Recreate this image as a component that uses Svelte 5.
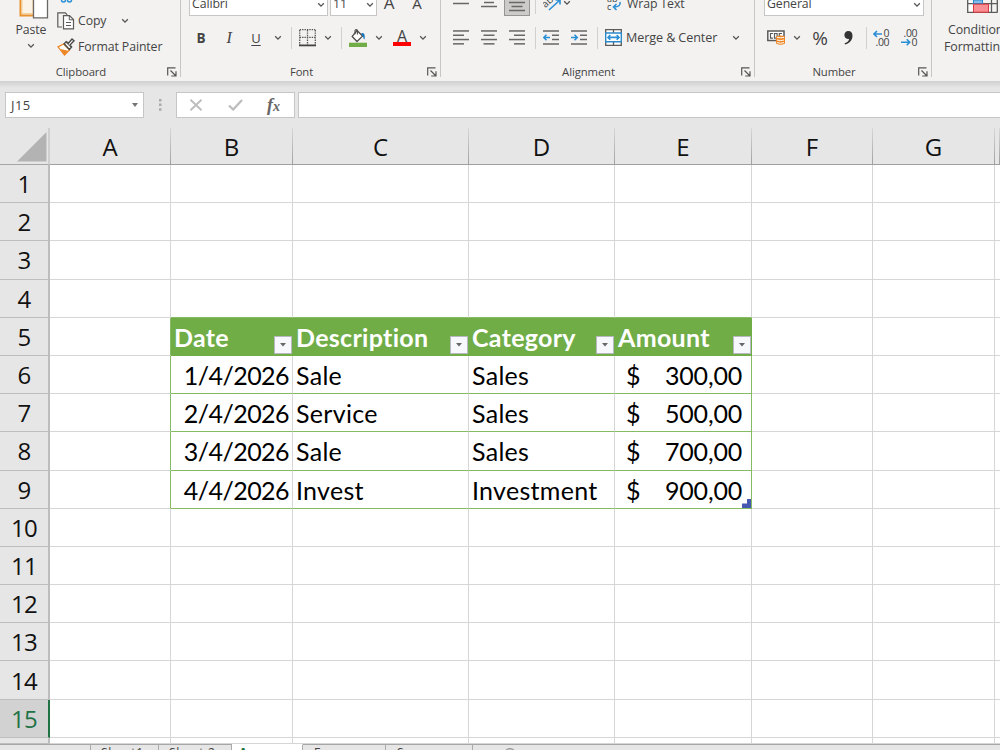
<script>
  const columns = ["A", "B", "C", "D", "E", "F", "G", ""];
  const rows = Array.from({ length: 15 }, (_, i) => i + 1);
  const selectedRow = 15;

  const table = {
    5: { B: "Date", C: "Description", D: "Category", E: "Amount" },
    6: { B: "1/4/2026", C: "Sale", D: "Sales", E: "300,00" },
    7: { B: "2/4/2026", C: "Service", D: "Sales", E: "500,00" },
    8: { B: "3/4/2026", C: "Sale", D: "Sales", E: "700,00" },
    9: { B: "4/4/2026", C: "Invest", D: "Investment", E: "900,00" },
  };

  const inTable = (row, col) => Boolean(table[row] && table[row][col]);
</script>

{#snippet chevron()}
  <svg class="chevron" width="8" height="6" viewBox="0 0 8 6"><path d="M1.2 1.3 4 4.1l2.8-2.8" /></svg>
{/snippet}

{#snippet launcher()}
  <svg class="launcher" width="10" height="10" viewBox="0 0 10 10">
    <path d="M.7 8.5V.8h7.8M3.5 3.5l5 5M9 4.2V9H4.2" />
  </svg>
{/snippet}

{#snippet lines(list)}
  <svg width="16" height="16" viewBox="0 0 16 16">
    {#each list as [x, w], i}
      <rect {x} y={0.2 + i * 4.3} width={w} height="1.5" fill="#686766" />
    {/each}
  </svg>
{/snippet}

<div class="app">
  <div class="ribbon">
    <section class="group clipboard">
      <div class="tools">
        <div class="paste">
          <svg width="30" height="20" viewBox="0 0 30 20">
            <path d="M1.5 0v15.500h13" fill="none" stroke="#e8912d" stroke-width="2" />
            <path d="M3 0v13.500h11V0" fill="#fbf3e6" stroke="#f6cf94" />
            <path d="M14.5 0v17.800h14V0" fill="#fff" stroke="#686766" stroke-width="1.3" />
          </svg>
          <span>Paste</span>
          {@render chevron()}
        </div>
        <div class="commands">
          <svg class="cut" width="14" height="4" viewBox="0 0 14 4">
            <circle cx="3.5" cy="0" r="2" /><circle cx="9.5" cy="0" r="2" />
          </svg>
          <div class="command">
            <svg width="18" height="18" viewBox="0 0 18 18">
              <path d="M5 15H.8V.8h7.5l2 2" fill="none" stroke="#5b5a59" stroke-width="1.2" />
              <path d="M6.5 3.6h6l4 4v9.3h-10z" fill="#fff" stroke="#5b5a59" stroke-width="1.2" />
              <path d="M12.3 3.8v4h4M9 10.5h5M9 13.5h5" fill="none" stroke="#5b5a59" />
            </svg>
            <span class="copy">Copy</span>
            {@render chevron()}
          </div>
          <div class="command">
            <svg width="18" height="18" viewBox="0 0 18 18">
              <path d="M1 8.8 6.5 6l6 6-5 5z" fill="#fff" stroke="#ee8625" stroke-width="1.3" />
              <path d="m3.5 11 7.5 1.8L7.5 17z" fill="#ee8625" />
              <path d="m7.2 5.7 2-2 2.2 1.5L15 1l2 1.8L13 7l1.6 2-2.2 2.4z" fill="#fff" stroke="#4c4b4a" stroke-width="1.4" />
              <path d="m9 4.3 5 5" stroke="#4c4b4a" />
            </svg>
            <span>Format Painter</span>
          </div>
        </div>
      </div>
      <footer><span>Clipboard</span>{@render launcher()}</footer>
    </section>

    <section class="group font">
      <div class="top">
        <div class="select name"><span>Calibri</span>{@render chevron()}</div>
        <div class="select size"><span>11</span>{@render chevron()}</div>
        <span class="letter grow">A</span>
        <span class="letter">A</span>
      </div>
      <div class="tools">
        <b>B</b>
        <i>I</i>
        <u>U</u>
        {@render chevron()}
        <hr />
        <svg width="17" height="18" viewBox="0 0 17 18">
          <path d="M.7.7h15.6M.7 8.4h15.6M.7 1v15M8.5 1v15M16.3 1v15" fill="none" stroke="#555" stroke-width="1.3" stroke-dasharray="1.4 1" />
          <path d="M0 16.4h17" stroke="#444" stroke-width="1.8" />
        </svg>
        {@render chevron()}
        <hr />
        <svg width="18" height="18" viewBox="0 0 18 18">
          <path d="m8 1.5 5.5 5.6-5.5 5.4-4.8-5.1z" fill="#fff" stroke="#4c4b4a" stroke-width="1.3" />
          <path d="M6 5.2V1.5Q7.3-.4 8.4 1.5v4" fill="none" stroke="#4c4b4a" stroke-width="1.1" />
          <path d="M12.3 4.2c2.8-.8 4 1.1 3.3 6.4-1.7-1-1.1-3-2.2-3.8z" fill="#1979bf" />
          <path d="M0 13.7h18V18H0z" fill="#70ad47" />
        </svg>
        {@render chevron()}
        <span class="font-color">A</span>
        {@render chevron()}
      </div>
      <footer><span>Font</span>{@render launcher()}</footer>
    </section>

    <section class="group alignment">
      <div class="top">
        <svg width="16" height="15" viewBox="0 0 16 15"><path d="M0 3.5h16" /></svg>
        <svg width="16" height="15" viewBox="0 0 16 15"><path d="M3 2.5h10M0 6.5h16" /></svg>
        <div class="pressed">
          <svg width="16" height="15" viewBox="0 0 16 15"><path d="M0 2.5h16M2.5 6.5h11M0 10.5h16" /></svg>
        </div>
        <hr />
        <svg width="19" height="15" viewBox="0 0 19 15">
          <text x="0" y="6" font-size="10" transform="rotate(-42 4 4)">ab</text>
          <path class="blue" d="M6 10 17 0M12.5 0H17v4.5" />
        </svg>
        {@render chevron()}
        <hr />
        <svg width="16" height="15" viewBox="0 0 16 15">
          <text x="1" y="2" font-size="9">ab</text>
          <text x="1" y="10" font-size="9">c</text>
          <path class="blue" d="M14 2q1 5-6 5M10.5 4 7.5 7l3 3" />
        </svg>
        <span>Wrap Text</span>
      </div>
      <div class="tools">
        {@render lines([[0, 16], [0, 11], [0, 16], [0, 11]])}
        {@render lines([[0, 16], [2.5, 11], [0, 16], [2.5, 11]])}
        {@render lines([[0, 16], [5, 11], [0, 16], [5, 11]])}
        <hr />
        <svg width="16" height="16" viewBox="0 0 16 16">
          <path d="M0 1h16M9 5.3h7M9 9.6h7M0 14h16" stroke="#686766" stroke-width="1.5" />
          <path class="blue" d="M7 7.5H.8M3.5 4.8.8 7.5l2.7 2.7" />
        </svg>
        <svg width="16" height="16" viewBox="0 0 16 16">
          <path d="M0 1h16M9 5.3h7M9 9.6h7M0 14h16" stroke="#686766" stroke-width="1.5" />
          <path class="blue" d="M0 7.5h6.2M3.5 4.8l2.7 2.7-2.7 2.7" />
        </svg>
        <hr />
        <svg width="17" height="17" viewBox="0 0 17 17">
          <path d="M.7.7h15.6v15.6H.7zM8.5.7v3M8.5 13v3.3" fill="#fff" stroke="#5b5a59" stroke-width="1.3" />
          <path d="M.7 4h15.6v8.8H.7z" fill="#fff" stroke="#2b88c9" stroke-width="1.4" />
          <path class="blue" d="M3 8.4h11M5.3 6 3 8.4l2.3 2.4M11.7 6 14 8.4l-2.3 2.4" />
        </svg>
        <span>Merge &amp; Center</span>
        {@render chevron()}
      </div>
      <footer><span>Alignment</span>{@render launcher()}</footer>
    </section>

    <section class="group number">
      <div class="top">
        <div class="select format"><span>General</span>{@render chevron()}</div>
      </div>
      <div class="tools">
        <svg width="18" height="15" viewBox="0 0 18 15">
          <path d="M.8 1h16.2v9.5H.8z" fill="#fff" stroke="#5b5a59" stroke-width="1.5" />
          <path d="M6 3.5H3.5v4.6H6M7.5 3.500h2.600v4.600H7.500zM15 3.500h-2.700v3" fill="none" stroke="#5b5a59" stroke-width="1.2" />
          <path d="M9 6.5q4.5-2 9 0v7q-4.5 2.4-9 0z" fill="#ee8625" />
          <path d="M10 7.3q3.500 1.200 7 0M10 10q3.500 1.200 7 0M10 12.600q3.500 1.200 7 0" fill="none" stroke="#fff" />
        </svg>
        {@render chevron()}
        <span class="percent">%</span>
        <svg width="9" height="14" viewBox="0 0 9 14">
          <path d="M4.2 0C7 0 8.500 1.900 8.500 4.700 8.500 9 5.800 12.200 1 13.500L.6 12.300C3.400 11.300 5 9.700 5.100 7.700 2.300 8.500.4 6.500.4 4 .4 1.700 2 0 4.200 0z" fill="#333" />
        </svg>
        <hr />
        <svg width="17" height="18" viewBox="0 0 17 18">
          <text x="10.5" y="8" font-size="10.5" textLength="6">0</text>
          <text x="2.5" y="17" font-size="10.5" textLength="14">.00</text>
          <path class="blue" d="M9 5H1M4 2 1 5l3 3" />
        </svg>
        <svg width="17" height="18" viewBox="0 0 17 18">
          <text x="2.500" y="8" font-size="10.5" textLength="14">.00</text>
          <text x="10.5" y="17" font-size="10.5" textLength="6">0</text>
          <path class="blue" d="M0 13.3h8.500M5.700 10.300l3 3-3 3" />
        </svg>
      </div>
      <footer><span>Number</span>{@render launcher()}</footer>
    </section>

    <section class="group styles">
      <svg width="31" height="14" viewBox="0 0 31 14">
        <path d="M.7 0v12.3h30M.7 3.700h30M24.500 0v12M30.300 0v12" fill="#fff" stroke="#5b5a59" stroke-width="1.3" />
        <path d="M6.5 0h9v3.500h-9z" fill="#83bceb" stroke="#2b88c9" />
        <path d="M6.5 4.200h15v8h-15z" fill="#fa8f93" stroke="#d9363e" />
      </svg>
      <span>Conditional</span>
      <span>Formatting</span>
    </section>
  </div>

  <div class="formula-bar">
    <div class="name-box">
      <span>J15</span>
      <svg width="6" height="4" viewBox="0 0 6 4"><path d="M0 0h6L3 4z" fill="#747474" /></svg>
    </div>
    <svg class="dots" width="3" height="12" viewBox="0 0 3 12">
      <path d="M0 0h2.500v2.500H0zM0 4.600h2.500v2.500H0zM0 9.200h2.500v2.500H0z" fill="#aaa" />
    </svg>
    <div class="actions">
      <svg width="14" height="12" viewBox="0 0 14 12"><path d="m1.5.8 11 10.400M12.500.8l-11 10.400" stroke="#bdbdbd" stroke-width="1.9" /></svg>
      <svg width="15" height="12" viewBox="0 0 15 12"><path d="m1 6.500 4.200 4L14 1" fill="none" stroke="#bdbdbd" stroke-width="2.3" /></svg>
      <span class="fx">f<small>x</small></span>
    </div>
    <div class="formula"></div>
  </div>

  <div class="sheet">
    <div class="corner">
      <svg width="30" height="30" viewBox="0 0 30 30"><path d="M29.500 0v29.500H0z" fill="#b3b3b3" /></svg>
    </div>
    {#each columns as col}
      <div class="col-header">{col}</div>
    {/each}

    {#each rows as row}
      <div class="row-header" class:selected={row === selectedRow}>{row}</div>
      {#each columns as col}
        <div
          class="cell"
          class:filled={inTable(row, col)}
          class:above={row === 4 && inTable(5, col)}
          class:before={col === "A" && table[row]}
          class:last={col === "E" && table[row]}
          class:head={row === 5 && inTable(row, col)}
          class:date={col === "B" && row > 5}
          class:amount={col === "E" && row > 5 && inTable(row, col)}
        >
          {#if inTable(row, col)}
            {#if col === "E" && row > 5}<span>$</span>{/if}
            <span class="value">{table[row][col]}</span>
            {#if row === 5}
              <span class="filter">
                <svg width="6" height="4" viewBox="0 0 6 4"><path d="M0 0h6L3 3.500z" fill="#666" /></svg>
              </span>
            {/if}
            {#if row === 9 && col === "E"}
              <svg class="resize" width="9" height="9" viewBox="0 0 9 9"><path d="M5 0h4v9H0V4.500h5z" fill="#4659b0" /></svg>
            {/if}
          {/if}
        </div>
      {/each}
    {/each}

    <div class="row-header"></div>
    {#each columns as _}
      <div class="cell"></div>
    {/each}
  </div>

  <div class="tabs">
    <div class="tab nav"></div>
    <div class="tab">Sheet1</div>
    <div class="tab second">Sheet 2</div>
    <div class="tab active">A</div>
    <div class="tab third">E</div>
    <div class="tab fourth">S</div>
    <div class="tab add">
      <svg width="14" height="14" viewBox="0 0 14 14"><circle cx="7" cy="7" r="6.3" fill="none" stroke="#777" /><path d="M7 4v6M4 7h6" stroke="#777" /></svg>
    </div>
  </div>
</div>

<style>
  :global(body) {
    overflow: hidden;
  }

  .app {
    display: flex;
    flex-direction: column;
    width: 1000px;
    height: 750px;
    overflow: hidden;
    background: #e6e6e6;
    color: #444;
    font-family: "Open Sans", "Noto Sans", sans-serif;
  }

  svg {
    display: block;
    flex: none;
  }

  hr {
    width: 1px;
    height: 22px;
    margin: 0;
    border: 0;
    background: #d2d0ce;
  }

  .ribbon {
    display: flex;
    flex: none;
    height: 81px;
    background: #f3f2f1;
    font-size: 12.3px;
    letter-spacing: -0.1px;
    line-height: 16px;
    white-space: nowrap;
  }

  .chevron path {
    fill: none;
    stroke: #555;
    stroke-width: 1.3;
  }

  .launcher path {
    fill: none;
    stroke: #555;
    stroke-width: 1.2;
  }

  .blue {
    fill: none;
    stroke: #2b8fd6;
    stroke-width: 1.6;
  }

  .ribbon text {
    fill: #444;
  }

  .group {
    display: grid;
    grid-template-rows: 16px 47px 18px;
    flex: none;
    box-sizing: border-box;
    height: 77px;
    border-right: 1px solid #c8c6c4;
  }

  .group footer {
    display: flex;
    grid-row: 3;
    align-items: center;
    padding-right: 3px;
    font-size: 11.3px;
  }

  .group footer span {
    flex: 1;
    padding-right: 5px;
    text-align: center;
  }

  .top,
  .tools {
    display: grid;
    justify-items: center;
    align-items: center;
  }

  .group > .tools {
    padding-bottom: 4px;
  }

  .clipboard {
    width: 181px;
    grid-template-rows: 63px 18px;
  }

  .clipboard footer {
    grid-row: 2;
  }

  .group.clipboard > .tools {
    display: flex;
    align-items: flex-start;
    padding: 0;
  }

  .paste {
    display: flex;
    flex-direction: column;
    align-items: center;
    width: 57px;
    padding-left: 5px;
    box-sizing: border-box;
  }

  .paste svg:first-child {
    margin: 0 0 2px 6px;
  }

  .paste .chevron {
    margin-top: 5px;
  }

  .cut {
    margin: 0 0 5px 3px;
    fill: none;
    stroke: #2b8fd6;
    stroke-width: 1.5;
  }

  .command {
    display: flex;
    align-items: center;
    gap: 3px;
    height: 26px;
  }

  .cut + .command {
    margin-top: -1px;
  }

  .copy {
    width: 40px;
  }

  .font {
    width: 260px;
  }

  .font .top {
    grid-template-columns: 139px 47px 20px 32px;
    gap: 0 2px;
    padding-left: 8px;
    justify-content: start;
  }

  .font .tools {
    grid-template-columns: 28px 28px 26px 18px 8px 24px 18px 8px 26px 16px 30px 12px;
    padding-left: 6px;
    justify-content: start;
    font-size: 14px;
  }

  .select {
    display: flex;
    justify-content: space-between;
    align-items: center;
    box-sizing: border-box;
    width: 100%;
    height: 26px;
    margin-top: -11px;
    padding: 3px 2px 0;
    border: 1px solid #c8c6c4;
    background: #fff;
  }

  .select .chevron {
    margin-top: 1px;
  }

  .letter {
    margin-top: -11px;
    font-size: 15px;
  }

  .letter.grow {
    font-size: 17px;
  }

  b {
    font-size: 13.5px;
  }

  i {
    font-family: "Liberation Serif", serif;
    font-size: 16px;
  }

  u {
    font-size: 13px;
    text-underline-offset: 2px;
  }

  .font-color {
    width: 18px;
    height: 17px;
    border-bottom: 4px solid #f00;
    font-size: 16px;
    line-height: 14px;
    text-align: center;
    box-sizing: border-box;
  }

  .alignment {
    width: 314px;
  }

  .alignment .tools {
    grid-template-columns: 28px 28px 28px 8px 24px 32px 5px 26px 104px 12px;
    padding-left: 6px;
    justify-content: start;
  }

  .alignment .top {
    grid-template-columns: 28px 28px 28px 8px 26px 4px 34px 22px 104px;
    padding-left: 6px;
    justify-content: start;
    align-items: start;
  }

  .alignment .top svg {
    stroke: #686766;
    stroke-width: 1.5;
  }

  .alignment .top text {
    stroke: none;
  }

  .alignment .top .blue {
    stroke: #2b8fd6;
  }

  .alignment .top hr {
    height: 14px;
  }

  .alignment .top hr:nth-of-type(2) {
    visibility: hidden;
  }

  .alignment .top > span {
    justify-self: start;
    margin: -4px 0 0 2px;
  }

  .alignment .tools > span {
    justify-self: start;
    margin-top: 1px;
    font-size: 12.6px;
  }

  .pressed {
    box-sizing: border-box;
    width: 26px;
    height: 16px;
    padding-left: 4px;
    border: 1px solid #979593;
    border-top: 0;
    background: #cdcbc9;
  }

  .number {
    width: 177px;
  }

  .number .top {
    padding: 0 7px 0 9px;
  }

  .number .tools {
    grid-template-columns: 26px 16px 30px 26px 10px 20px 36px;
    padding-left: 8px;
    justify-content: start;
  }

  .percent {
    font-size: 19px;
  }

  .styles {
    display: flex;
    flex-direction: column;
    align-items: flex-start;
    border: 0;
    padding-left: 12px;
    font-size: 12.4px;
  }

  .styles svg {
    margin: 0 0 8px 23px;
  }

  .styles span:nth-of-type(1) {
    margin: 0 0 1px 4px;
  }

  .formula-bar {
    display: flex;
    flex: none;
    box-sizing: border-box;
    height: 47px;
    padding: 11px 0 10px 5px;
    background: linear-gradient(#d0d0d0, #e6e6e6 7px);
  }

  .name-box,
  .actions,
  .formula {
    display: flex;
    align-items: center;
    box-sizing: border-box;
    height: 26px;
    border: 1px solid #c6c6c6;
    background: #fff;
  }

  .name-box {
    justify-content: space-between;
    width: 139px;
    padding: 0 5px;
    font-size: 13px;
    letter-spacing: 0.4px;
  }

  .dots {
    margin: 7px 14px 0 15px;
  }

  .actions {
    gap: 25px;
    width: 119px;
    margin-right: 3px;
    padding-left: 12px;
  }

  .fx {
    margin-left: -1px;
    font: italic 700 18px "Liberation Serif", serif;
    color: #666;
  }

  .fx small {
    font-size: 14px;
  }

  .formula {
    flex: 1;
    border-right: 0;
  }

  .sheet {
    display: grid;
    grid-template-columns: 50px 121px 122px 176px 146px 137px 121px 122px 5px;
    grid-template-rows: 37px repeat(15, 38.2px) 6px;
    flex: none;
    height: 616px;
    overflow: hidden;
    background: #fff;
  }

  .corner,
  .col-header,
  .row-header {
    display: flex;
    align-items: center;
    justify-content: center;
    box-sizing: border-box;
    background: #e6e6e6;
    color: #111;
    font-size: 24px;
    line-height: 30px;
  }

  .corner {
    padding: 2px 0 0 15px;
    border-right: 2px solid #cfcfcf;
    border-bottom: 1px solid #a6a6a6;
  }

  .col-header {
    border-right: 1px solid;
    border-bottom: 1px solid #9f9f9f;
    border-image: linear-gradient(#d9d9d9, #9f9f9f) 1;
    border-top: 0;
    border-left: 0;
    padding-top: 1px;
  }

  .row-header {
    border-right: 2px solid #bdbdbd;
    border-bottom: 1px solid #bdbdbd;
    letter-spacing: -0.6px;
    padding-top: 1px;
  }

  .selected {
    border-right-color: #217346;
    background: #d2d2d2;
    color: #217346;
  }

  .cell {
    display: flex;
    align-items: center;
    position: relative;
    box-sizing: border-box;
    min-width: 0;
    padding: 1px 3px 0;
    border-right: 1px solid #d6d6d6;
    border-bottom: 1px solid #d6d6d6;
    color: #000;
    font-family: Lato, "Open Sans", sans-serif;
    font-size: 25px;
    letter-spacing: 0.3px;
    line-height: 30px;
    white-space: nowrap;
  }

  .filled,
  .above {
    border-bottom-color: #86bb63;
  }

  .before,
  .last {
    border-right-color: #86bb63;
  }

  .head {
    border-color: #70ad47;
    background: #70ad47;
    color: #fff;
    font-weight: 700;
  }

  .date {
    justify-content: flex-end;
    letter-spacing: -0.55px;
  }

  .amount {
    justify-content: space-between;
    padding: 1px 9px 0 11px;
    letter-spacing: -0.2px;
  }

  .filter {
    display: flex;
    align-items: center;
    justify-content: center;
    position: absolute;
    right: 0;
    bottom: 1px;
    box-sizing: border-box;
    width: 18px;
    height: 18px;
    border: 1px solid #b8b8c4;
    background: #f7f8fb;
  }

  .resize {
    position: absolute;
    right: 0;
    bottom: 0;
  }

  .tabs {
    display: flex;
    flex: none;
    height: 6px;
    overflow: hidden;
    font-size: 12px;
    line-height: 16px;
  }

  .tab {
    box-sizing: border-box;
    width: 68px;
    height: 24px;
    padding-left: 10px;
    border-top: 1px solid #a6a6a6;
    border-right: 1px solid #ababab;
    letter-spacing: 0.7px;
  }

  .nav {
    width: 91px;
  }

  .second {
    width: 73px;
  }

  .active {
    width: 71px;
    padding-left: 7px;
    border-top-color: #fff;
    background: #fff;
    color: #217346;
    font-weight: 700;
  }

  .third {
    width: 83px;
    padding-left: 11px;
  }

  .fourth {
    width: 87px;
    padding-left: 11px;
  }

  .add {
    flex: 1;
    padding: 3px 0 0 30px;
    border-right: 0;
  }
</style>
